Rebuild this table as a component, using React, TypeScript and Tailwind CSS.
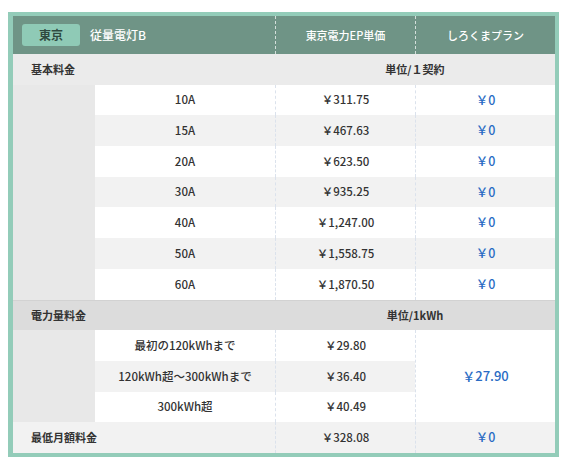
import React from "react";

const FONT = {
  fontFamily: '"Noto Sans CJK JP", "Noto Sans", sans-serif',
};

const basicRows = [
  { amp: "10A", price: "￥311.75" },
  { amp: "15A", price: "￥467.63" },
  { amp: "20A", price: "￥623.50" },
  { amp: "30A", price: "￥935.25" },
  { amp: "40A", price: "￥1,247.00" },
  { amp: "50A", price: "￥1,558.75" },
  { amp: "60A", price: "￥1,870.50" },
];

const usageRows = [
  { label: "最初の120kWhまで", price: "￥29.80" },
  { label: "120kWh超〜300kWhまで", price: "￥36.40" },
  { label: "300kWh超", price: "￥40.49" },
];

const rowBg = (i: number) => (i % 2 === 0 ? "bg-white" : "bg-[#f2f2f2]");

export default function App() {
  return (
    <div className="h-[463px] w-[569px] bg-white pt-[12px] pl-[8px]" style={FONT}>
      <div className="w-[551px] border-[4px] border-l-[5px] border-[#93ccb9]">
        <div className="grid grid-cols-[82px_180px_140px_140px] grid-rows-[38px_repeat(13,30.7px)] text-[11.5px] font-medium text-[#333]">
          {/* header */}
          <div className="col-span-2 flex items-center gap-[10px] bg-[#6f9486] pl-[9px]">
            <span className="flex h-[22px] w-[58px] items-center justify-center rounded-[3px] bg-[#8fcab6] text-[12px] font-bold text-[#2f4a41]">
              東京
            </span>
            <span className="text-[12px] font-medium text-white">従量電灯B</span>
          </div>
          <div className="flex items-center justify-center border-l border-dashed border-white/70 bg-[#6f9486] text-[11px] text-white">
            東京電力EP単価
          </div>
          <div className="flex items-center justify-center border-l border-dashed border-white/70 bg-[#6f9486] text-[11px] text-white">
            しろくまプラン
          </div>

          {/* 基本料金 */}
          <div className="col-span-2 flex items-center bg-[#ebebeb] pl-[18px] text-[11px] font-bold">基本料金</div>
          <div className="col-span-2 flex items-center justify-center bg-[#ebebeb] text-[11px] font-bold">単位/１契約</div>
          <div className="row-span-7 bg-[#e8e8e8]" />
          {basicRows.map((r, i) => (
            <React.Fragment key={r.amp}>
              <div className={`col-start-2 flex items-center justify-center ${rowBg(i)}`}>{r.amp}</div>
              <div className={`flex items-center justify-center border-l border-dashed border-[#dbe2ec] ${rowBg(i)}`}>
                {r.price}
              </div>
              <div className={`flex items-center justify-center border-l border-dashed border-[#dbe2ec] text-[12.5px] text-[#2a6cc4] ${rowBg(i)}`}>
                ￥0
              </div>
            </React.Fragment>
          ))}

          {/* 電力量料金 */}
          <div className="col-span-2 flex items-center border-t border-[#d2d2d2] bg-[#dcdcdc] pl-[18px] text-[11px] font-bold">
            電力量料金
          </div>
          <div className="col-span-2 flex items-center justify-center border-t border-[#d2d2d2] bg-[#dcdcdc] text-[11px] font-bold">
            単位/1kWh
          </div>
          <div className="row-span-3 bg-[#e8e8e8]" />
          {usageRows.map((r, i) => (
            <React.Fragment key={r.label}>
              <div className={`col-start-2 flex items-center justify-center ${rowBg(i)}`}>{r.label}</div>
              <div className={`flex items-center justify-center border-l border-dashed border-[#dbe2ec] ${rowBg(i)}`}>
                {r.price}
              </div>
              {i === 0 && (
                <div className="row-span-3 flex items-center justify-center border-l border-dashed border-[#dbe2ec] bg-white text-[13px] text-[#2a6cc4]">
                  ￥27.90
                </div>
              )}
            </React.Fragment>
          ))}

          {/* 最低月額料金 */}
          <div className="col-span-2 flex items-center bg-[#f2f2f2] pl-[18px] text-[11px] font-bold">最低月額料金</div>
          <div className="flex items-center justify-center border-l border-dashed border-[#dbe2ec] bg-[#f2f2f2]">
            ￥328.08
          </div>
          <div className="flex items-center justify-center border-l border-dashed border-[#dbe2ec] bg-[#f2f2f2] text-[12.5px] text-[#2a6cc4]">
            ￥0
          </div>
        </div>
      </div>
    </div>
  );
}
